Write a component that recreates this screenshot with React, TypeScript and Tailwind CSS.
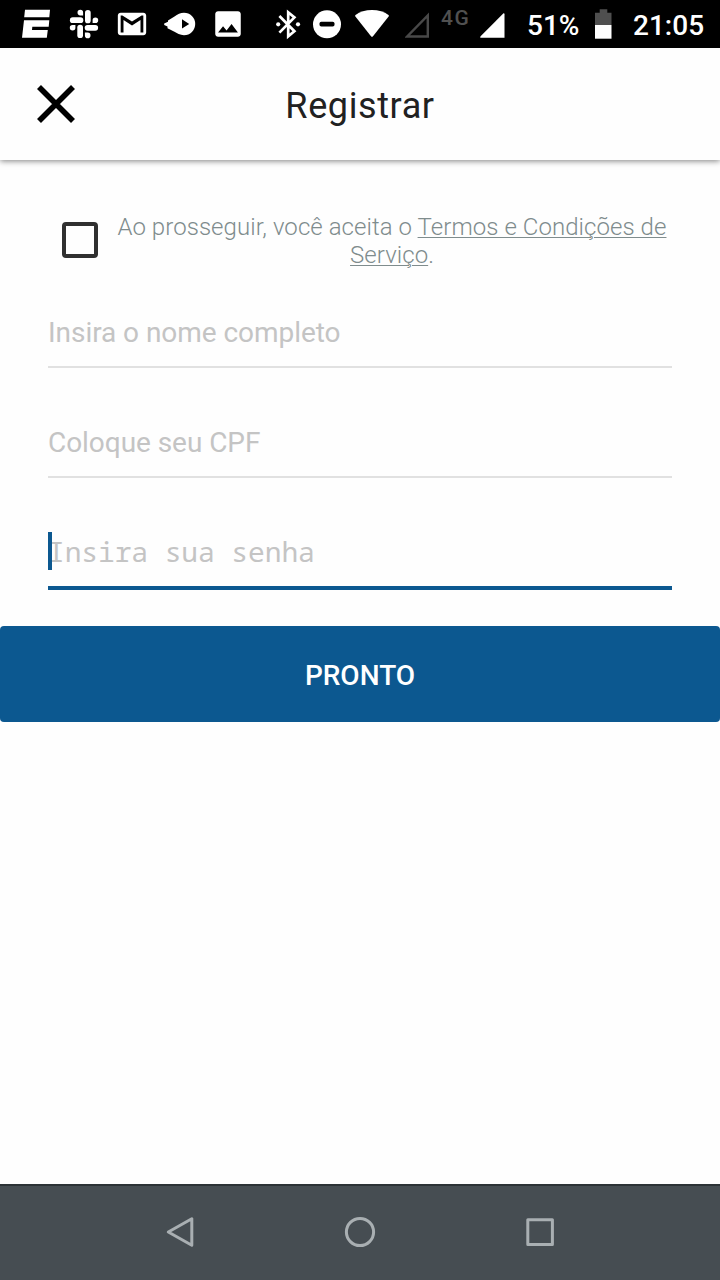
import type { ReactNode } from 'react';
import { MdImage } from 'react-icons/md';

/**
 * Android status bar
 */
const NotificationSlot = ({ children }: { children: ReactNode }) => (
  <div className="flex w-12 h-12 items-center justify-center">{children}</div>
);

const NotificationIcons = () => (
  <div className="flex pl-3">
    <NotificationSlot>
      <svg viewBox="0 0 48 48" className="w-12 h-12" fill="currentColor">
        <path d="M13 9.7H38L37.3 17.3H12.2Z" />
        <path d="M12 20.2H37.3L36.7 26.8H20.3L20 30H35.8L34.8 37.8H10Z" />
      </svg>
    </NotificationSlot>
    <NotificationSlot>
      <svg viewBox="0 0 48 48" className="w-12 h-12" fill="currentColor">
        {[0, 90, 180, 270].map((angle) => (
          <g key={angle} transform={`rotate(${angle} 24 24)`}>
            <rect x="9.9" y="17.3" width="13.4" height="5.7" rx="2.85" />
            <path d="M17.5 12.6a2.8 2.8 0 0 1 5.6 0v2.8h-2.8a2.8 2.8 0 0 1-2.8-2.8z" />
          </g>
        ))}
      </svg>
    </NotificationSlot>
    <NotificationSlot>
      <svg viewBox="0 0 24 24" className="w-[34px] h-[34px]" fill="currentColor">
        <path d="M20 4H4c-1.1 0-2 .9-2 2v12c0 1.1.9 2 2 2h16c1.1 0 2-.9 2-2V6c0-1.1-.9-2-2-2zm0 14h-2V9.25L12 13 6 9.25V18H4V6h1.2l6.8 4.25L18.8 6H20v12z" />
      </svg>
    </NotificationSlot>
    <NotificationSlot>
      <svg viewBox="0 0 48 48" className="w-12 h-12">
        <path
          d="M28 12.8A11.2 11.2 0 1 1 28 35.2C24 35.2 21 33.4 18 31.6L11.5 28.2V26.6L8.2 25V23.6L12 21.8V20.6L18.5 16.4C21.5 14.4 24.5 12.8 28 12.8Z"
          fill="currentColor"
        />
        <path d="M26 19.3L33.2 24L26 28.5Z" fill="#000" />
      </svg>
    </NotificationSlot>
    <NotificationSlot>
      <MdImage size={34} />
    </NotificationSlot>
  </div>
);

const SystemIcons = () => (
  <div className="flex items-center">
    <svg viewBox="0 0 26 48" className="w-[26px] h-12">
      <path
        d="M4.4 16L19.4 31.2L13.2 36.3V12.3L19.4 17.4L4.4 32.6"
        fill="none"
        stroke="currentColor"
        strokeWidth="2.7"
      />
      <circle cx="3.2" cy="24.3" r="2.1" fill="currentColor" />
      <circle cx="23" cy="24.3" r="2.1" fill="currentColor" />
    </svg>
    <svg viewBox="0 0 28 48" className="ml-3 w-7 h-12">
      <circle cx="14" cy="24.3" r="14" fill="currentColor" />
      <rect x="6.5" y="21.8" width="15" height="4.8" rx="1.8" fill="#000" />
    </svg>
    <svg viewBox="0 0 34 48" className="ml-3.5 w-[34px] h-12" fill="currentColor">
      <path d="M17 10C10.5 10 4.8 11.8.5 15Q-.2 15.7.4 16.5L16 36.3Q17 37.4 18 36.3L33.6 16.5Q34.2 15.7 33.5 15C29.2 11.8 23.5 10 17 10Z" />
    </svg>
    <svg viewBox="0 0 24 48" className="ml-4 w-6 h-12">
      <path d="M22.8 15.5V36.5H2.2Z" fill="none" stroke="#484848" strokeWidth="2.4" />
    </svg>
    <span className="mb-[13px] ml-3 w-[29px] text-[21px] leading-6 font-medium tracking-[1.6px] text-[#505050]">
      4G
    </span>
    <svg viewBox="0 0 25 48" className="ml-2.5 w-[25px] h-12" fill="currentColor">
      <path d="M23.5 13.3Q24.5 13 24.5 14.3V37.8H1.2Q-.4 37.8.6 36.3Z" />
    </svg>
    <span className="mt-1 ml-[22px] w-[53px] text-[28px] leading-8 font-medium">51%</span>
    <svg viewBox="0 0 17 48" className="ml-[15px] w-[17px] h-12">
      <path d="M0 12.8H4.7V9.3H12.3V12.8H16.5V25H0Z" fill="#4f4f4f" />
      <path d="M0 25H16.5V38.7H0Z" fill="currentColor" />
    </svg>
    <span className="mt-1 ml-[21px] w-[71px] text-[28px] leading-8 font-medium">21:05</span>
  </div>
);

const StatusBar = () => (
  <div className="flex h-12 justify-between overflow-hidden bg-black pr-4 text-white">
    <NotificationIcons />
    <SystemIcons />
  </div>
);

const Header = () => (
  <header className="relative grid h-28 grid-cols-[112px_1fr_112px] items-center bg-[#fefefe] shadow-[0_1px_6px_rgba(0,0,0,0.5)]">
    <button aria-label="Fechar" className="flex h-28 items-center justify-center">
      <svg viewBox="0 0 40 40" className="w-10 h-10" fill="none" stroke="#000" strokeWidth="5.6">
        <path d="M3 3L37 37M37 3L3 37" />
      </svg>
    </button>
    <h1 className="pt-1 text-center text-[36px] leading-[42px] tracking-[0.6px] text-[#212121]">
      Registrar
    </h1>
  </header>
);

/**
 * Form
 */
const TermsCheckbox = () => (
  <div className="flex pr-12 pl-[62px]">
    <button
      role="checkbox"
      aria-checked={false}
      aria-label="Aceitar termos"
      className="mt-[9px] h-9 w-9 shrink-0 rounded border-4 border-[#303030]"
    />
    <p className="ml-3.5 flex-1 text-center text-[24px] leading-7 font-light tracking-[0.06px] whitespace-nowrap text-[#7f8c8d]">
      Ao prosseguir, você aceita o{' '}
      <a className="underline decoration-1 underline-offset-2">
        Termos e Condições de
        <br />
        Serviço
      </a>
      .
    </p>
  </div>
);

const Field = ({ placeholder, type = 'text' }: { placeholder: string; type?: string }) => (
  <input
    type={type}
    placeholder={placeholder}
    className="block h-[72px] w-full border-b-2 border-[#e1e1e1] bg-transparent pt-0.5 text-[28px] tracking-[-0.05px] outline-none placeholder:text-[#c4c4c4]"
  />
);

const PasswordField = ({ placeholder }: { placeholder: string }) => (
  <div className="relative">
    <input
      type="password"
      placeholder={placeholder}
      className="block h-[74px] w-full border-b-4 border-[#0c5890] bg-transparent font-['Noto_Sans_Mono','DejaVu_Sans_Mono',monospace] text-[28px] tracking-[-0.13px] outline-none placeholder:text-[#c4c4c4]"
    />
    <span className="absolute top-4 left-0 h-[38px] w-1 bg-[#0c5890]" />
  </div>
);

const NavigationBar = () => (
  <nav className="flex h-24 items-center justify-center border-t-2 border-[#2c3236] bg-[#464d52] text-[#a9afb2]">
    {[
      <path key="back" d="M31.8 7.8V34.2L8.3 21Z" />,
      <circle key="home" cx="20" cy="21" r="13.6" />,
      <rect key="recents" x="7.8" y="8.8" width="24.6" height="24.6" />,
    ].map((shape, i) => (
      <div key={i} className="flex w-[180px] justify-center">
        <svg
          viewBox="0 0 40 44"
          className="w-10 h-11"
          fill="none"
          stroke="currentColor"
          strokeWidth="3"
          strokeLinejoin="round"
        >
          {shape}
        </svg>
      </div>
    ))}
  </nav>
);

export default function App() {
  return (
    <div className="flex h-screen w-full flex-col bg-[#fefefe] font-[Roboto,sans-serif]">
      <StatusBar />
      <Header />
      <main className="flex-1 pt-[53px]">
        <TermsCheckbox />
        <div className="flex flex-col gap-[38px] px-12 pt-[27px]">
          <Field placeholder="Insira o nome completo" />
          <Field placeholder="Coloque seu CPF" />
          <PasswordField placeholder="Insira sua senha" />
        </div>
        <button className="mt-9 h-24 w-full rounded bg-[#0c5890] pt-[3px] text-[28px] font-medium text-white">
          PRONTO
        </button>
      </main>
      <NavigationBar />
    </div>
  );
}
